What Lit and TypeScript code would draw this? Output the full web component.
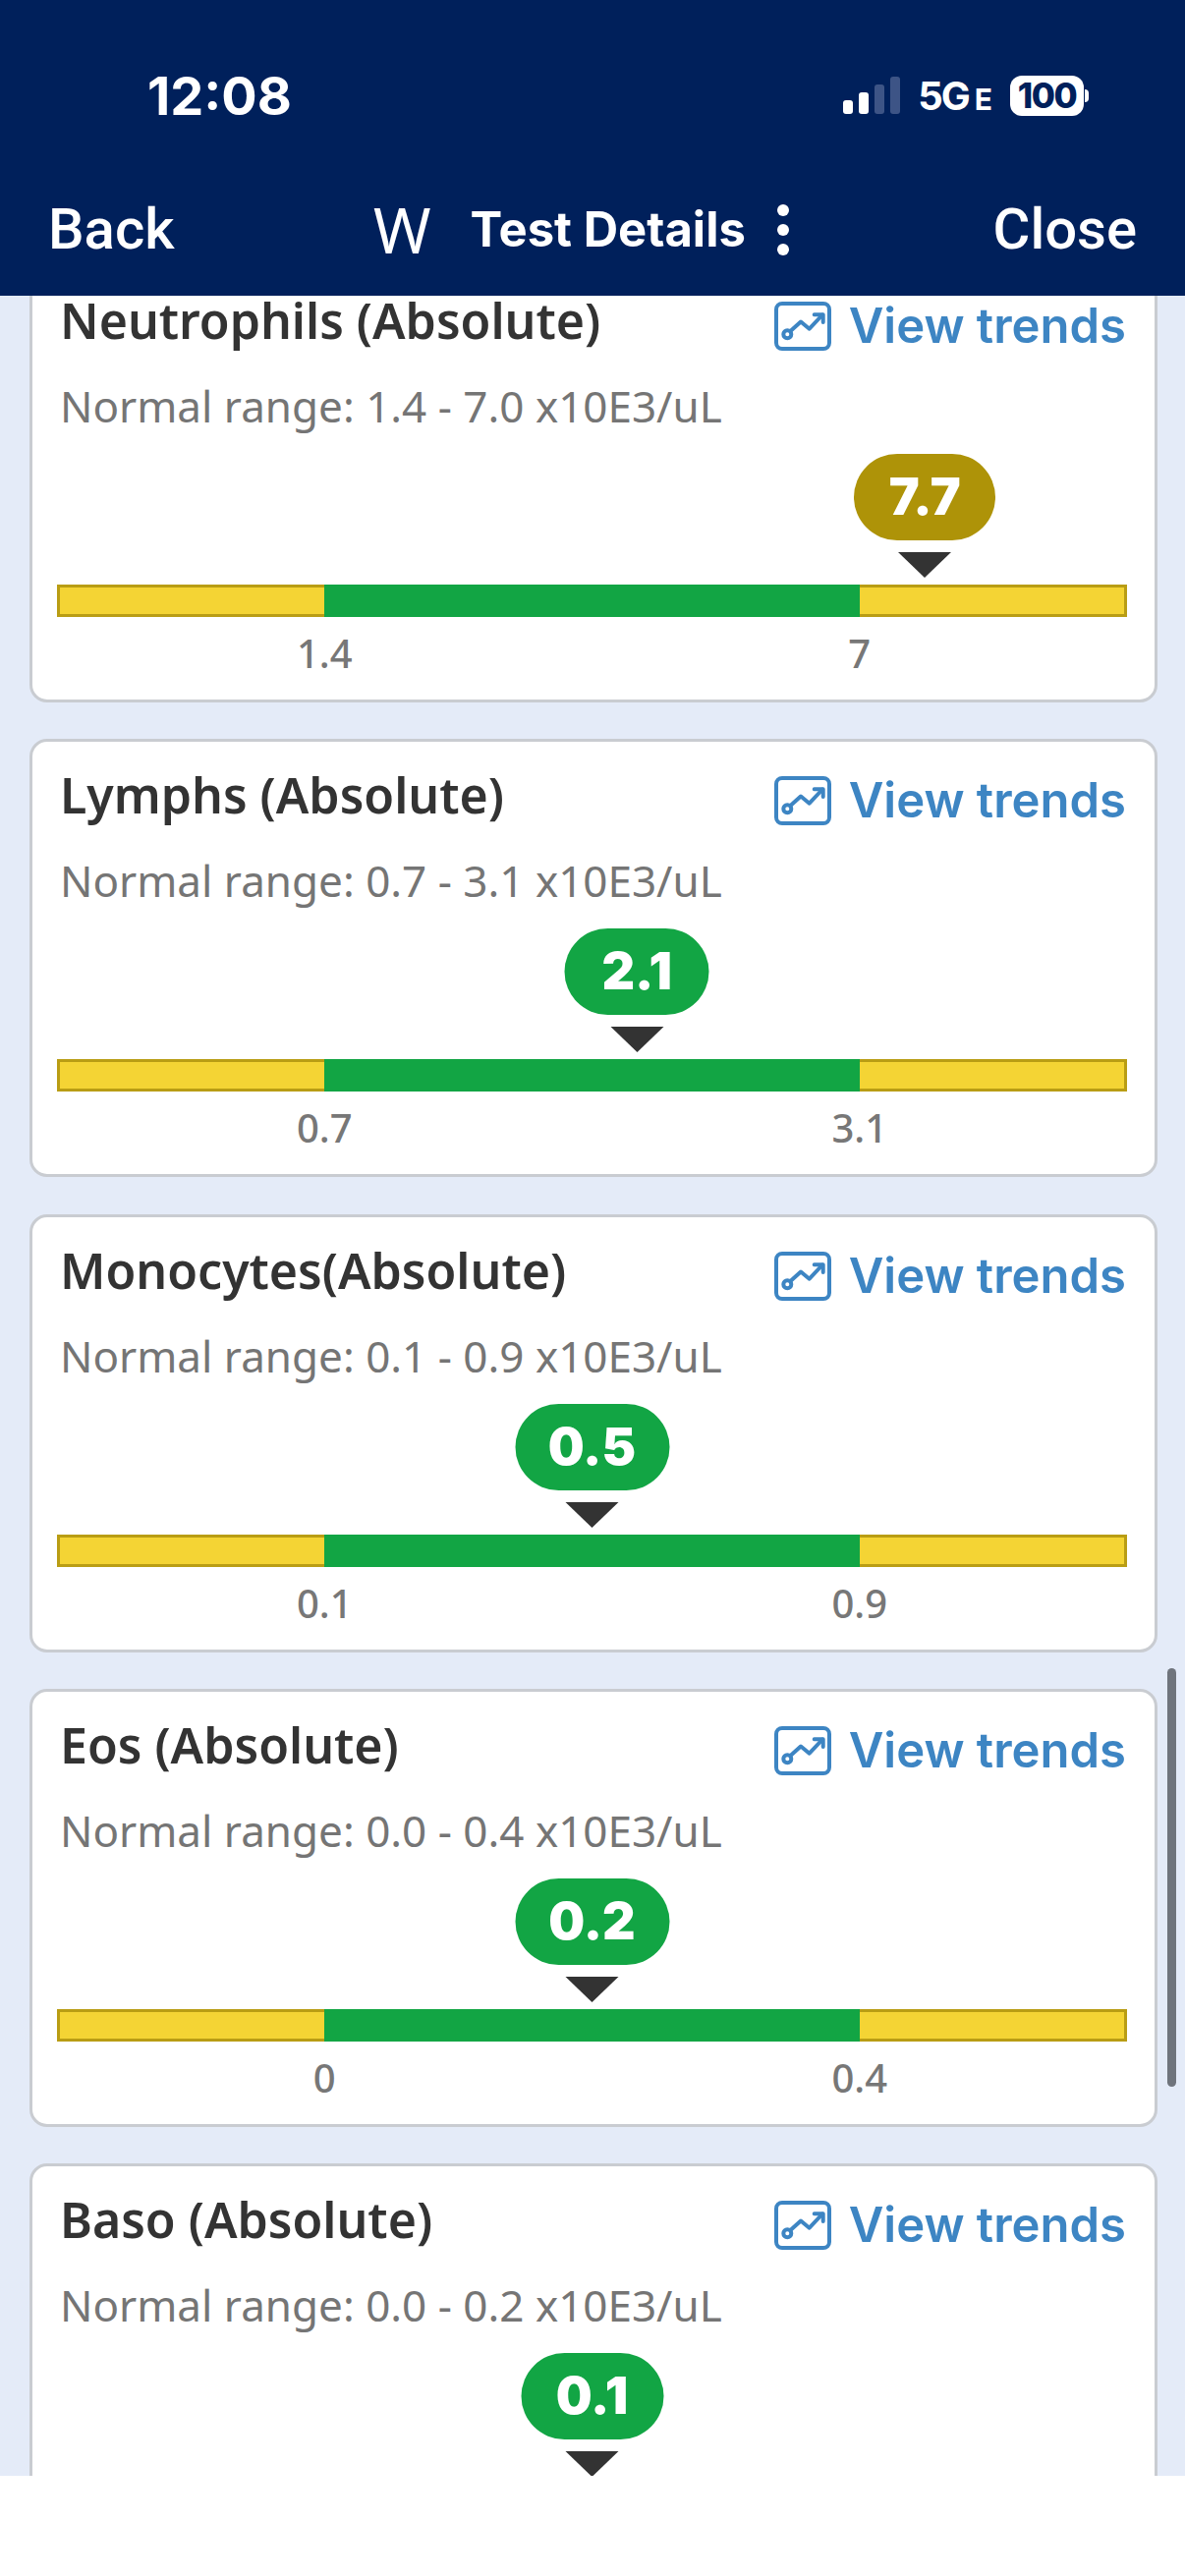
import { LitElement, html, css, svg } from "lit";
import { customElement } from "lit/decorators.js";

interface Test { name: string; lo: string; hi: string; range: string; value: string; pos: number; width: number; high?: boolean; }

const TESTS: Test[] = [
  { name: "Neutrophils (Absolute)", lo: "1.4", hi: "7", range: "1.4 - 7.0", value: "7.7", pos: 81.1, width: 144, high: true },
  { name: "Lymphs (Absolute)", lo: "0.7", hi: "3.1", range: "0.7 - 3.1", value: "2.1", pos: 54.2, width: 147 },
  { name: "Monocytes(Absolute)", lo: "0.1", hi: "0.9", range: "0.1 - 0.9", value: "0.5", pos: 50, width: 157 },
  { name: "Eos (Absolute)", lo: "0", hi: "0.4", range: "0.0 - 0.4", value: "0.2", pos: 50, width: 157 },
  { name: "Baso (Absolute)", lo: "0", hi: "0.2", range: "0.0 - 0.2", value: "0.1", pos: 50, width: 145 },
];

@customElement("app-root")
export class AppRoot extends LitElement {
  static styles = css`
    :host { display: block; width: 1206px; height: 2622px; background: #fff; overflow: hidden; font-family: "Noto Sans", sans-serif; }
    .top { height: 301px; background: #00205b; color: #fff; display: flex; flex-direction: column; position: relative; z-index: 2; font-family: Roboto, sans-serif; }
    .status { height: 190px; padding: 4px 0 0 150px; display: flex; align-items: center; justify-content: space-between; box-sizing: border-box; }
    .time { font: 700 54px Inter, sans-serif; }
    .sys { display: flex; align-items: center; margin-right: 98px; }
    .signal { display: block; margin-right: 18px; }
    .net { font: 700 40px Inter, sans-serif; letter-spacing: -2px; }
    .net small { font-size: 30px; margin-left: 6px; }
    .batt { margin-left: 20px; display: flex; align-items: center; }
    .batt b { width: 75px; height: 41px; border-radius: 12px; background: #fff; color: #00205b; font: 800 35px/41px Inter, sans-serif; letter-spacing: -1.5px; text-align: center; }
    .batt i { width: 4px; height: 13px; margin-left: 1px; background: #fff; border-radius: 0 4px 4px 0; }
    .nav { flex: 1; position: relative; display: flex; align-items: flex-start; justify-content: space-between; padding: 11px 49px 0 49px; }
    .nav span { font: 500 58px/64px Roboto, sans-serif; }
    .mid { position: absolute; left: 380px; top: 12px; display: flex; align-items: center; }
    .mid .w { font: 400 63px/64px "Noto Sans", sans-serif; }
    .mid .t { font: 700 49px/64px Inter, sans-serif; margin-left: 40px; }
    .kebab { margin-left: 32px; display: flex; flex-direction: column; gap: 8px; }
    .kebab i { width: 12px; height: 12px; border-radius: 50%; background: #fff; display: block; }
    .scroll { height: 2219px; background: #e4ebf8; overflow: hidden; position: relative; }
    .list { margin-top: -32px; padding: 0 28px 0 30px; display: flex; flex-direction: column; gap: 37.25px; }
    .card { height: 446px; box-sizing: border-box; background: #fff; border: 3px solid #c9ccd1; border-radius: 18px; padding: 0 28px 0 25px; flex: none; }
    .head { display: flex; justify-content: space-between; align-items: flex-start; padding-top: 22px; height: 96px; box-sizing: border-box; }
    .name { font: 600 50px/64px "Noto Sans", sans-serif; color: #333; margin-left: 3px; }
    .trend { display: flex; align-items: center; color: #3d85c3; font: 600 49px/64px Inter, sans-serif; padding-top: 6px; margin-right: 1px; }
    .trend svg { display: block; margin-right: 18px; }
    .range { font: 400 44px/60px "Noto Sans", sans-serif; color: #757575; letter-spacing: 0; margin: 15px 0 0 3px; }
    .meter { margin-top: 19px; height: 145px; position: relative; }
    .marker { position: absolute; top: 0; transform: translateX(-50%); display: flex; flex-direction: column; align-items: center; }
    .pill { height: 88px; border-radius: 44px; color: #fff; font: 900 52px/88px Inter, sans-serif; text-align: center; background: #12a544; }
    .pill.high { background: #ae9308; }
    .tri { margin-top: 12px; width: 0; height: 0; border-left: 27px solid transparent; border-right: 27px solid transparent; border-top: 26px solid #333; }
    .bar { position: absolute; left: 0; right: 0; top: 133px; height: 33px; display: grid; grid-template-columns: 1fr 2fr 1fr; }
    .y { background: #f4d434; border: 3px solid #b99d14; }
    .y.l { border-right: 0; }
    .y.r { border-left: 0; }
    .g { background: #12a544; }
    .labels { position: relative; height: 50px; margin-top: 33px; font: 500 40px/50px "Noto Sans", sans-serif; color: #777; }
    .labels span { position: absolute; top: 0; transform: translateX(-50%); }
    .sb { position: absolute; right: 9px; top: 1397px; width: 9px; height: 426px; border-radius: 5px; background: #6f747c; }
    .foot { height: 102px; background: #fff; }
  `;

  private icon() {
    return html`<svg width="58" height="50" viewBox="0 0 58 50" fill="none" stroke="#3d85c3" stroke-width="4" stroke-linecap="round" stroke-linejoin="round">
      ${svg`<rect x="2" y="2" width="54" height="46" rx="6"/>
      <circle cx="13.3" cy="33.3" r="4"/>
      <path d="M17 29.5 L27 20.5 L35.7 27.7 L49 13.5"/>
      <path d="M40.7 13.2 H49.7 V21"/>`}
    </svg>`;
  }

  private card(t: Test) {
    return html`<section class="card">
      <div class="head">
        <div class="name">${t.name}</div>
        <div class="trend">${this.icon()}View trends</div>
      </div>
      <div class="range">Normal range: ${t.range} x10E3/uL</div>
      <div class="meter">
        <div class="bar"><div class="y l"></div><div class="g"></div><div class="y r"></div></div>
        <div class="marker" style="left:${t.pos}%">
          <div class="pill ${t.high ? "high" : ""}" style="width:${t.width}px">${t.value}</div>
          <div class="tri"></div>
        </div>
      </div>
      <div class="labels"><span style="left:25%">${t.lo}</span><span style="left:75%">${t.hi}</span></div>
    </section>`;
  }

  render() {
    return html`
      <header class="top">
        <div class="status">
          <div class="time">12:08</div>
          <div class="sys">
            <svg class="signal" width="58" height="38" viewBox="0 0 58 38">
              <rect x="0" y="24" width="10" height="14" rx="3" fill="#fff"/>
              <rect x="16" y="16" width="10" height="22" rx="3" fill="#fff"/>
              <rect x="32" y="8" width="10" height="30" rx="3" fill="#3d5486"/>
              <rect x="48" y="0" width="10" height="38" rx="3" fill="#3d5486"/>
            </svg>
            <div class="net">5G<small>E</small></div>
            <div class="batt"><b>100</b><i></i></div>
          </div>
        </div>
        <nav class="nav">
          <span>Back</span>
          <div class="mid"><div class="w">W</div><div class="t">Test Details</div><div class="kebab"><i></i><i></i><i></i></div></div>
          <span>Close</span>
        </nav>
      </header>
      <main class="scroll">
        <div class="list">${TESTS.map((t) => this.card(t))}</div>
        <div class="sb"></div>
      </main>
      <div class="foot"></div>
    `;
  }
}
